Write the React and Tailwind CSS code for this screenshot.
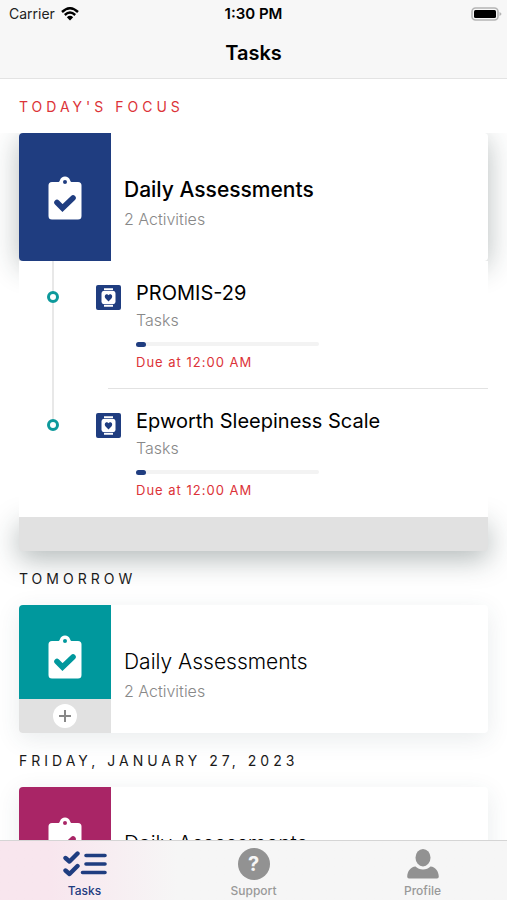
import React from "react";

function ClipboardIcon({ tick }) {
  return (
    <svg width="34" height="44" viewBox="0 0 34 44" aria-hidden="true">
      <path
        fill="#fff"
        fillRule="evenodd"
        d="M4 6H10.6C11.4 5.600 11.600 5 12 4C12.800 1.800 14.600.5 17 .5S21.200 1.800 22 4C22.400 5 22.600 5.600 23.400 6H30Q33.500 6 33.500 9.500V40Q33.500 43.500 30 43.500H4Q.5 43.500 .5 40V9.500Q.5 6 4 6ZM17 4A2 2 0 1 0 17 8A2 2 0 1 0 17 4Z"
      />
      <path
        d="M9 26.500L14.500 32L25 22"
        fill="none"
        stroke={tick}
        strokeWidth="5.600"
        strokeLinecap="round"
      />
    </svg>
  );
}

function WatchIcon() {
  return (
    <svg width="25" height="25" viewBox="0 0 25 25" aria-hidden="true">
      <rect width="25" height="25" rx="2" fill="#1f3d80" />
      <path d="M8 3.200H17V5H8ZM8 20H17V21.800H8Z" fill="#fff" />
      <rect x="5.500" y="5.800" width="14" height="13.400" rx="3" fill="#fff" />
      <path
        d="M12.500 16.400L9.600 13.400C8 11.600 9 9.200 10.800 9.200C11.600 9.200 12.200 9.600 12.500 10.200C12.800 9.600 13.400 9.200 14.200 9.200C16 9.200 17 11.600 15.400 13.400Z"
        fill="#1f3d80"
      />
    </svg>
  );
}

function SectionTitle({ className = "", children }) {
  return (
    <h2 className={`flex h-[54px] items-center px-[19px] pt-[2px] text-sm tracking-[4px] ${className}`}>
      {children}
    </h2>
  );
}

function CardText({ title, subtitle, strong }) {
  return (
    <div className="flex flex-col justify-center pt-3 pl-[13px]">
      <h3 className={`text-[21px] leading-7 text-black ${strong ? "font-medium" : "font-light"}`}>
        {title}
      </h3>
      <p className="mt-[3px] text-base leading-6 font-light text-[#888]">{subtitle}</p>
    </div>
  );
}

function Activity({ title, last }) {
  return (
    <li className="flex h-32">
      <div className="flex w-[68px] shrink-0 flex-col items-center">
        <span className="h-[30px] w-[2px] bg-[#e8e8e8]" />
        <span className="size-3 rounded-full border-[3px] border-[#0d999b] bg-white" />
        {!last && <span className="w-[2px] flex-1 bg-[#e8e8e8]" />}
      </div>
      <div className="w-[49px] shrink-0 pt-6 pl-[9px]">
        <WatchIcon />
      </div>
      <div className="relative flex-1 pt-[18px]">
        <h4 className="text-[20px] leading-7 text-black">{title}</h4>
        <p className="mt-px text-base leading-6 font-light text-[#888]">Tasks</p>
        <div
          role="progressbar"
          aria-label={`${title} progress`}
          aria-valuenow={5}
          className="mt-[10px] h-1 w-[183px] rounded-full bg-[#f3f3f3]"
        >
          <div className="h-[5px] w-[10px] rounded-full bg-[#1f3d80]" />
        </div>
        <p className="mt-[6px] text-[13px] leading-5 tracking-[1px] text-[#dc3338]">
          Due at 12:00 AM
        </p>
        {!last && <span className="absolute right-0 bottom-0 -left-[28px] h-px bg-[#e2e2e2]" />}
      </div>
    </li>
  );
}

function UpcomingCard({ color, tick }) {
  return (
    <article className="mx-[19px] flex h-32 rounded bg-white shadow-[0_6px_24px_rgba(40,70,80,0.1)]">
      <div className="flex w-[92px] shrink-0 flex-col overflow-hidden rounded-l">
        <div className={`flex flex-1 items-center justify-center pt-[10px] ${color}`}>
          <ClipboardIcon tick={tick} />
        </div>
        <div className="flex h-[34px] items-center justify-center bg-[#e1e1e1]">
          <button
            type="button"
            aria-label="Expand activities"
            className="flex size-6 items-center justify-center rounded-full bg-white"
          >
            <svg width="12" height="12" viewBox="0 0 12 12" aria-hidden="true">
              <path d="M6 0V12M0 6H12" stroke="#888" strokeWidth="2" />
            </svg>
          </button>
        </div>
      </div>
      <CardText title="Daily Assessments" subtitle="2 Activities" />
    </article>
  );
}

function Tab({ label, active, children }) {
  return (
    <button
      type="button"
      aria-current={active ? "page" : undefined}
      className={`flex flex-1 flex-col items-center pt-[7px] text-xs font-medium ${
        active ? "text-[#1f3d80]" : "text-[#999]"
      }`}
    >
      <span className="flex h-8 items-center">{children}</span>
      <span className="mt-[3px] leading-4">{label}</span>
    </button>
  );
}

export default function App() {
  return (
    <div className="flex h-screen flex-col overflow-hidden bg-white font-[Inter,'Liberation_Sans',sans-serif] text-[#1a1a1a]">
      <header className="relative z-20 h-[79px] shrink-0 border-b border-[#e3e3e3] bg-[#f7f7f7]">
        <div className="grid h-7 grid-cols-3 items-center px-[9px] text-sm">
          <span className="flex items-center gap-[6px] text-[#222]">
            Carrier
            <svg width="18" height="14" viewBox="0 0 18 14" aria-hidden="true">
              <path
                d="M1 5Q9-2.500 17 5M3.800 8Q9 3.200 14.200 8"
                fill="none"
                stroke="#000"
                strokeWidth="2.400"
              />
              <path d="M5.800 10.200Q9 7.400 12.200 10.200L9 13.500Z" fill="#000" />
            </svg>
          </span>
          <span className="text-center text-[15px] font-semibold text-black">1:30 PM</span>
          <svg
            className="-mr-1 justify-self-end"
            width="31"
            height="14"
            viewBox="0 0 31 14"
            role="img"
            aria-label="Battery full"
          >
            <rect x="1" y="1" width="26" height="12" rx="3.500" fill="none" stroke="#b5b5b5" strokeWidth="1.600" />
            <rect x="3" y="3" width="22" height="8" rx="1.500" fill="#000" />
            <path d="M28.500 5Q30.500 6 30.500 7T28.500 9Z" fill="#b5b5b5" />
          </svg>
        </div>
        <h1 className="pt-[11px] text-center text-[20px] leading-7 font-semibold text-black">Tasks</h1>
      </header>

      <main className="min-h-0 flex-1 overflow-y-auto [scrollbar-width:none]">
        <section>
          <SectionTitle className="relative z-10 bg-white text-[#dc3338]">TODAY'S FOCUS</SectionTitle>
          <article className="px-[19px]">
            <div className="flex h-32 rounded bg-white shadow-[0_6px_28px_rgba(30,50,50,0.32)]">
              <div className="flex w-[92px] shrink-0 items-center justify-center rounded-l bg-[#1f3d80] pt-[2px]">
                <ClipboardIcon tick="#1f3d80" />
              </div>
              <CardText title="Daily Assessments" subtitle="2 Activities" strong />
            </div>
            <ul className="relative z-10 bg-white">
              <Activity title="PROMIS-29" />
              <Activity title="Epworth Sleepiness Scale" last />
            </ul>
            <div className="h-[34px] rounded-b bg-[#e1e1e1] shadow-[0_8px_28px_rgba(30,50,50,0.35)]" />
          </article>
        </section>

        <section>
          <SectionTitle className="relative">TOMORROW</SectionTitle>
          <div className="relative">
            <UpcomingCard color="bg-[#00989d]" tick="#00989d" />
          </div>
        </section>

        <section>
          <SectionTitle className="relative">FRIDAY, JANUARY 27, 2023</SectionTitle>
          <div className="relative">
            <UpcomingCard color="bg-[#a92566]" tick="#a92566" />
          </div>
        </section>
      </main>

      <nav className="relative z-20 flex h-[60px] shrink-0 border-t border-[#d5d5d5] bg-[#f6f6f6] bg-linear-to-r from-[#f8e6ee] from-10% to-[#f6f6f6] to-35%">
        <Tab label="Tasks" active>
          <svg width="44" height="26" viewBox="0 0 44 26" aria-hidden="true">
            <path
              d="M2.500 7L6.500 10.500L14.500 2.500M2.500 19.500L6.500 23L14.500 15"
              fill="none"
              stroke="#1f3d80"
              strokeWidth="4.400"
              strokeLinecap="round"
              strokeLinejoin="round"
            />
            <path
              d="M23 4.500H42M23 13H42M19.500 21.500H42"
              stroke="#1f3d80"
              strokeWidth="3.600"
              strokeLinecap="round"
            />
          </svg>
        </Tab>
        <Tab label="Support">
          <span className="flex size-8 items-center justify-center rounded-full bg-[#929292] text-xl font-bold text-[#f6f6f6]">
            ?
          </span>
        </Tab>
        <Tab label="Profile">
          <svg width="32" height="30" viewBox="0 0 32 30" fill="#929292" aria-hidden="true">
            <ellipse cx="16" cy="8.700" rx="7.500" ry="8.700" />
            <path d="M8.500 17.500Q11.500 20.500 16 20.500T23.500 17.500C28.500 18 31.500 22 31.800 27.500Q31.800 29.500 30 29.500H2Q.2 29.500 .2 27.500C.5 22 3.500 18 8.500 17.500Z" />
          </svg>
        </Tab>
      </nav>
    </div>
  );
}
